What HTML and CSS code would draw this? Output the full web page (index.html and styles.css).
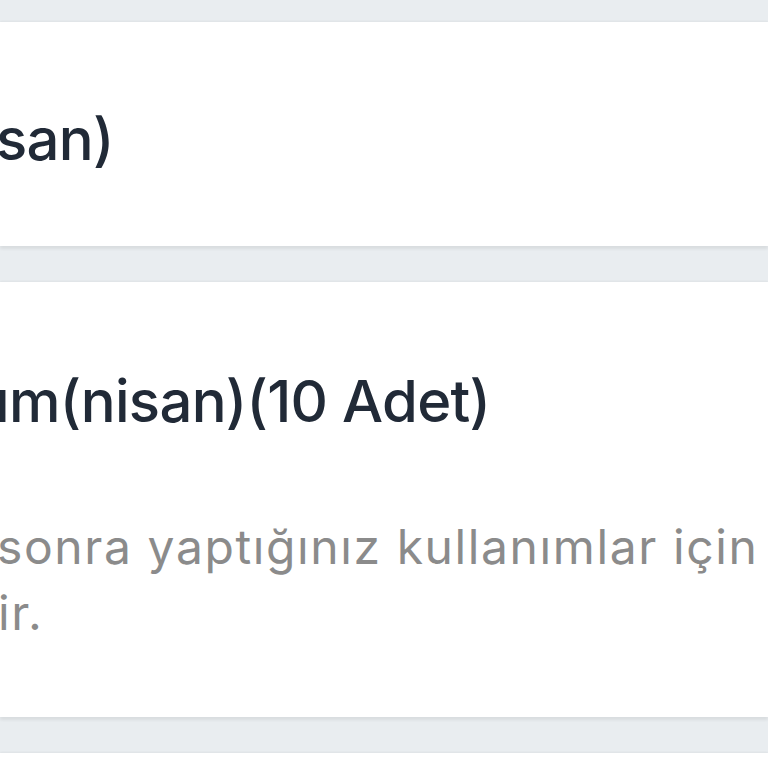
FILE: index.html
```html
<!DOCTYPE html>
<html lang="tr">
<head>
<meta charset="utf-8">
<link rel="stylesheet" href="styles.css">
</head>
<body>
<div class="page">
  <section class="card card-first">
    <div class="title title-one">san)</div>
  </section>
  <section class="card card-second">
    <div class="title title-two">ım(nisan)(10 Adet)</div>
    <div class="desc">
      <div class="line line-one">sonra yaptığınız kullanımlar için ücret</div>
      <div class="line line-two">ir.</div>
    </div>
  </section>
  <section class="card card-third"></section>
</div>
</body>
</html>
```

FILE: styles.css
```css
html, body {
  margin: 0;
  padding: 0;
  background: #e9edf0;
  overflow: hidden;
  width: 768px;
  height: 768px;
}

.page {
  display: flex;
  flex-direction: column;
  padding-top: 22px;
  gap: 36px;
  font-family: Inter, "Noto Sans", sans-serif;
}

.card {
  background: #ffffff;
  overflow: hidden;
  box-shadow: 0 3px 3px rgba(0, 0, 0, 0.07), 0 -1px 2px rgba(0, 0, 0, 0.05);
}

.card-first {
  height: 224px;
  display: flex;
  align-items: center;
}

.card-second {
  height: 435px;
  padding-top: 84px;
  box-sizing: border-box;
}

.card-third {
  height: 60px;
}

.title {
  color: #212a37;
  font-size: 58px;
  font-weight: 500;
  white-space: nowrap;
  line-height: 70px;
  letter-spacing: -0.7px;
}

.title-one {
  margin-left: -4px;
  margin-top: 10px;
}

.title-two {
  margin-left: -5px;
}

.desc {
  margin-top: 78px;
  color: #8b8b8b;
  font-size: 48px;
  font-weight: 400;
  line-height: 66px;
  letter-spacing: 1.6px;
}

.line {
  white-space: nowrap;
}

.line-one {
  margin-left: -3px;
}

.line-two {
  margin-left: -2px;
}
```
